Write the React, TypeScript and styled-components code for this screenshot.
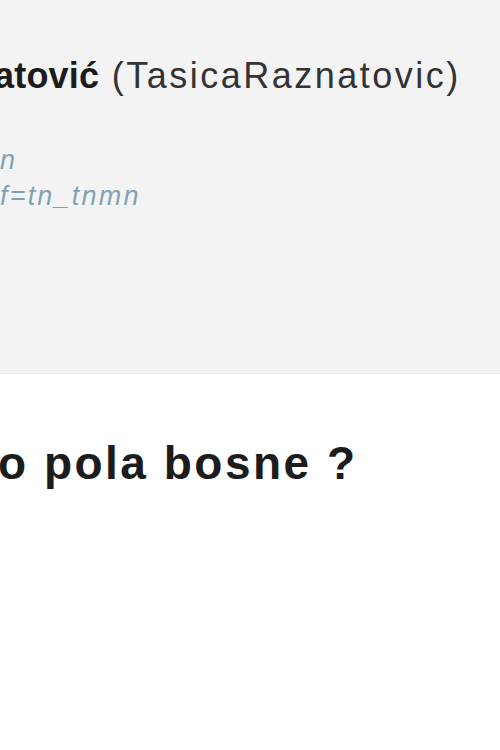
import React from 'react';
import styled, { createGlobalStyle } from 'styled-components';

const GlobalStyle = createGlobalStyle`
  html, body {
    margin: 0;
    padding: 0;
    background: #fff;
    font-family: "Liberation Sans", Arial, sans-serif;
  }
`;

export default function App() {
  return (
    <Page>
      <GlobalStyle />
      <ProfileBox>
        <NameLine>
          <b>atović</b> (TasicaRaznatovic)
        </NameLine>
        <LinkList>
          <LinkLine>n</LinkLine>
          <LinkLine>f=tn_tnmn</LinkLine>
        </LinkList>
      </ProfileBox>
      <Tweet>o pola bosne ?</Tweet>
    </Page>
  );
}

const Page = styled.div`
  width: 500px;
  height: 750px;
  overflow: hidden;
  background: #fff;
`;

const ProfileBox = styled.section`
  height: 374px;
  box-sizing: border-box;
  padding-top: 55px;
  background: #f3f3f3;
  border-bottom: 1px solid #ebebeb;
`;

const NameLine = styled.h1`
  margin: 0;
  text-indent: -6px;
  font-size: 36px;
  line-height: 42px;
  font-weight: 400;
  letter-spacing: 2.5px;
  color: #333;
  white-space: nowrap;

  b {
    font-weight: 700;
    letter-spacing: 0.2px;
    color: #1c1c1c;
  }
`;

const LinkList = styled.div`
  margin-top: 45px;
  display: flex;
  flex-direction: column;
`;

const LinkLine = styled.span`
  font-size: 27px;
  line-height: 36px;
  font-style: italic;
  letter-spacing: 2.2px;
  color: #7fa3b6;
`;

const Tweet = styled.p`
  margin: 62px 0 0;
  text-indent: -2px;
  font-size: 46px;
  line-height: 54px;
  font-weight: 700;
  letter-spacing: 2.5px;
  color: #1c1c1c;
  white-space: nowrap;
`;
